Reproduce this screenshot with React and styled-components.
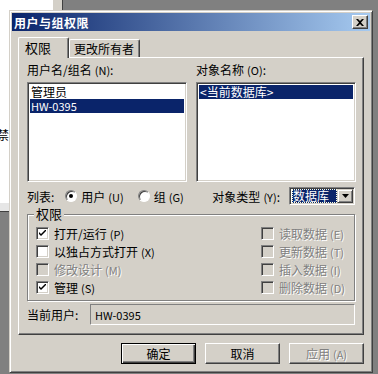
import React from 'react';
import styled, { createGlobalStyle } from 'styled-components';

const face = '#D4D0C8';
const font = '"Noto Sans CJK SC", "Liberation Sans", sans-serif';

const GlobalStyle = createGlobalStyle`
  html, body { margin: 0; padding: 0; }
  body {
    width: 378px;
    height: 374px;
    overflow: hidden;
    background: #808080;
    font-family: ${font};
    font-size: 12px;
    color: #000;
  }
`;

// desktop behind the dialog

const Desktop = styled.div`
  position: relative;
  width: 378px;
  height: 374px;
  overflow: hidden;
`;

const BackWindow = styled.div`
  position: absolute;
  left: 0;
  top: 0;
  width: 53px;
  height: 203px;
  background: #fff;
  border-bottom: 8px solid #e6e6e6;
`;

const BackEdge = styled.div`
  position: absolute;
  left: 0;
  top: 211px;
  width: 53px;
  height: 1px;
  background: #404040;
`;

const BackBar = styled.div`
  position: absolute;
  left: 53px;
  top: 0;
  width: 9px;
  height: 12px;
  background: ${face};
  border-right: 1px solid #404040;
`;

const BackText = styled.span`
  position: absolute;
  left: -3px;
  top: 128px;
  font-size: 12px;
  line-height: 14px;
`;

// dialog frame

const Dialog = styled.div`
  position: absolute;
  left: 9px;
  top: 10px;
  width: 364px;
  height: 363px;
  box-sizing: border-box;
  background: ${face};
  border: 1px solid;
  border-color: ${face} #404040 #404040 ${face};
  box-shadow: inset 1px 1px #fff, inset -1px -1px #808080;
  padding: 2px;
  display: flex;
  flex-direction: column;
`;

const TitleBar = styled.div`
  height: 18px;
  display: flex;
  align-items: center;
  justify-content: space-between;
  padding: 0 2px;
  background: linear-gradient(to right, #0a246a, #a6caf0);
`;

const Title = styled.span`
  color: #fff;
  font-weight: bold;
  font-size: 12px;
  letter-spacing: 0.5px;
`;

const CloseButton = styled.div`
  width: 16px;
  height: 14px;
  box-sizing: border-box;
  background: ${face};
  border: 1px solid;
  border-color: #fff #404040 #404040 #fff;
  box-shadow: inset -1px -1px #808080;
  display: flex;
  align-items: center;
  justify-content: center;
`;

const Body = styled.div`
  padding: 6px 6px 0 6px;
  display: flex;
  flex-direction: column;
`;

// tabs

const TabStrip = styled.div`
  display: flex;
  align-items: flex-end;
  height: 20px;
`;

const Tab = styled.div`
  position: relative;
  z-index: ${p => (p.active ? 2 : 1)};
  box-sizing: border-box;
  height: ${p => (p.active ? '21px' : '18px')};
  margin-bottom: ${p => (p.active ? '-1px' : '0')};
  padding: ${p => (p.active ? '3px 6px 0 6px' : '2px 4px 0 4px')};
  width: ${p => p.width}px;
  background: ${face};
  border-top: 1px solid #fff;
  border-left: 1px solid #fff;
  border-right: 1px solid #404040;
  border-radius: 2px 2px 0 0;
  box-shadow: inset -1px 0 #808080;
  font-size: ${p => (p.active ? '13px' : '12px')};
  line-height: 14px;
`;

const Panel = styled.div`
  box-sizing: border-box;
  height: 278px;
  border: 1px solid;
  border-color: #fff #404040 #404040 #fff;
  box-shadow: inset -1px -1px #808080;
  padding: 5px 7px 0 8px;
  display: flex;
  flex-direction: column;
`;

const Columns = styled.div`
  display: grid;
  grid-template-columns: 160px 160px;
  column-gap: 9px;
`;

const Label = styled.div`
  line-height: 14px;
  margin-bottom: 5px;
  white-space: nowrap;
`;

const ListBox = styled.div`
  box-sizing: border-box;
  height: 100px;
  background: #fff;
  border: 1px solid;
  border-color: #808080 #fff #fff #808080;
  box-shadow: inset 1px 1px #404040, inset -1px -1px ${face};
  padding: 2px;
`;

const ListItem = styled.div`
  height: 14px;
  line-height: 14px;
  padding-left: 1px;
  white-space: nowrap;
  background: ${p => (p.selected ? '#0a246a' : 'transparent')};
  color: ${p => (p.selected ? '#fff' : '#000')};
  font-size: ${p => (p.latin ? '11px' : '12px')};
`;

const OptionRow = styled.div`
  display: flex;
  align-items: center;
  height: 18px;
  margin-top: 5px;
  white-space: nowrap;
`;

const RowLabel = styled.span`
  margin-right: 11px;
`;

const RadioLabel = styled.span`
  display: flex;
  align-items: center;
  gap: 4px;
  margin-right: ${p => p.gap}px;
`;

const Radio = styled.span`
  width: 12px;
  height: 12px;
  box-sizing: border-box;
  border-radius: 50%;
  background: #fff;
  border: 1px solid;
  border-color: #808080 #fff #fff #808080;
  box-shadow: inset 1px 1px #404040;
  display: flex;
  align-items: center;
  justify-content: center;
  &::after {
    content: '';
    width: 4px;
    height: 4px;
    border-radius: 50%;
    background: ${p => (p.checked ? '#000' : 'transparent')};
  }
`;

const TypeLabel = styled.span`
  margin-left: auto;
  margin-right: 9px;
`;

const Select = styled.div`
  box-sizing: border-box;
  width: 66px;
  height: 18px;
  background: #fff;
  border: 1px solid;
  border-color: #808080 #fff #fff #808080;
  box-shadow: inset 1px 1px #404040, inset -1px -1px ${face};
  padding: 1px 1px 1px 2px;
  display: flex;
  margin-right: 1px;
`;

const SelectValue = styled.span`
  flex: 1;
  background: #0a246a;
  color: #fff;
  line-height: 14px;
  font-size: 12px;
  outline: 1px dotted #ffd;
  outline-offset: -1px;
  padding-left: 1px;
  white-space: nowrap;
`;

const SelectButton = styled.span`
  width: 16px;
  box-sizing: border-box;
  background: ${face};
  border: 1px solid;
  border-color: ${face} #404040 #404040 ${face};
  box-shadow: inset 1px 1px #fff, inset -1px -1px #808080;
  display: flex;
  align-items: center;
  justify-content: center;
`;

const Group = styled.div`
  position: relative;
  margin-top: 9px;
  margin-right: 1px;
  height: 87px;
  box-sizing: border-box;
  border: 1px solid #808080;
  box-shadow: inset 1px 1px #fff, 1px 1px #fff;
  padding: 9px 8px 0 8px;
  display: grid;
  grid-template-columns: 225px 1fr;
  grid-auto-rows: 18px;
`;

const Legend = styled.span`
  position: absolute;
  top: -8px;
  left: 6px;
  padding: 0 2px;
  background: ${face};
  line-height: 14px;
  font-size: 13px;
`;

const CheckRow = styled.div`
  display: flex;
  align-items: center;
  gap: 5px;
  white-space: nowrap;
  color: ${p => (p.disabled ? '#808080' : '#000')};
  text-shadow: ${p => (p.disabled ? '1px 1px #fff' : 'none')};
`;

const Box = styled.span`
  width: 13px;
  height: 13px;
  flex: none;
  box-sizing: border-box;
  background: ${p => (p.disabled ? face : '#fff')};
  border: 1px solid;
  border-color: #808080 #fff #fff #808080;
  box-shadow: inset 1px 1px #404040, inset -1px -1px ${face};
  display: flex;
  align-items: center;
  justify-content: center;
`;

const Key = styled.span`
  font-size: 11px;
  margin-left: 3px;
`;

const UserRow = styled.div`
  display: flex;
  align-items: center;
  margin-top: 3px;
  margin-right: 1px;
`;

const UserLabel = styled.span`
  width: 63px;
  white-space: nowrap;
`;

const UserField = styled.div`
  flex: 1;
  height: 21px;
  box-sizing: border-box;
  border: 1px solid;
  border-color: #808080 #fff #fff #808080;
  display: flex;
  align-items: center;
  padding-left: 4px;
  font-size: 11px;
`;

const ButtonRow = styled.div`
  display: flex;
  justify-content: flex-end;
  gap: 9px;
  margin-top: 8px;
`;

const Button = styled.div`
  width: 75px;
  height: 21px;
  box-sizing: border-box;
  background: ${face};
  border: 1px solid;
  border-color: ${p => (p.primary ? '#000' : `#fff #404040 #404040 #fff`)};
  box-shadow: ${p =>
    p.primary
      ? 'inset 1px 1px #fff, inset -1px -1px #404040, inset -2px -2px #808080'
      : 'inset -1px -1px #808080'};
  display: flex;
  align-items: center;
  justify-content: center;
  color: ${p => (p.disabled ? '#808080' : '#000')};
  text-shadow: ${p => (p.disabled ? '1px 1px #fff' : 'none')};
`;

const Check = () => (
  <svg width="7" height="7" viewBox="0 0 7 7">
    <path d="M0 2 L0 4 L2 6 L7 1 L7 -1 L2 4 Z" fill="#000" />
  </svg>
);

const leftPerms = [
  { text: '打开/运行', key: '(P)', checked: true },
  { text: '以独占方式打开', key: '(X)' },
  { text: '修改设计', key: '(M)', disabled: true },
  { text: '管理', key: '(S)', checked: true },
];

const rightPerms = [
  { text: '读取数据', key: '(E)' },
  { text: '更新数据', key: '(T)' },
  { text: '插入数据', key: '(I)' },
  { text: '删除数据', key: '(D)' },
];

const Perm = ({ item, disabled }) => (
  <CheckRow disabled={disabled}>
    <Box disabled={disabled}>{item.checked && <Check />}</Box>
    <span>
      {item.text}
      <Key>{item.key}</Key>
    </span>
  </CheckRow>
);

export default function App() {
  const rows = [];
  leftPerms.forEach((item, i) => {
    rows.push(<Perm key={'l' + i} item={item} disabled={item.disabled} />);
    rows.push(<Perm key={'r' + i} item={rightPerms[i]} disabled />);
  });

  return (
    <Desktop>
      <GlobalStyle />
      <BackWindow />
      <BackEdge />
      <BackBar />
      <BackText>禁:</BackText>
      <Dialog>
        <TitleBar>
          <Title>用户与组权限</Title>
          <CloseButton>
            <svg width="8" height="7" viewBox="0 0 8 7">
              <path d="M0 0h2l2 2 2-2h2L5 3.5 8 7H6L4 5 2 7H0l3-3.5z" fill="#000" />
            </svg>
          </CloseButton>
        </TitleBar>
        <Body>
          <TabStrip>
            <Tab active width={51}>权限</Tab>
            <Tab width={71}>更改所有者</Tab>
          </TabStrip>
          <Panel>
            <Columns>
              <div>
                <Label>用户名/组名<Key>(N)</Key>:</Label>
                <ListBox>
                  <ListItem>管理员</ListItem>
                  <ListItem selected latin>HW-0395</ListItem>
                </ListBox>
              </div>
              <div>
                <Label>对象名称<Key>(O)</Key>:</Label>
                <ListBox>
                  <ListItem selected>&lt;当前数据库&gt;</ListItem>
                </ListBox>
              </div>
            </Columns>
            <OptionRow>
              <RowLabel>列表:</RowLabel>
              <RadioLabel gap={14}>
                <Radio checked />
                <span>用户<Key>(U)</Key></span>
              </RadioLabel>
              <RadioLabel gap={0}>
                <Radio />
                <span>组<Key>(G)</Key></span>
              </RadioLabel>
              <TypeLabel>对象类型<Key>(Y)</Key>:</TypeLabel>
              <Select>
                <SelectValue>数据库</SelectValue>
                <SelectButton>
                  <svg width="7" height="4" viewBox="0 0 7 4">
                    <path d="M0 0h7L3.5 4z" fill="#000" />
                  </svg>
                </SelectButton>
              </Select>
            </OptionRow>
            <Group>
              <Legend>权限</Legend>
              {rows}
            </Group>
            <UserRow>
              <UserLabel>当前用户:</UserLabel>
              <UserField>HW-0395</UserField>
            </UserRow>
          </Panel>
          <ButtonRow>
            <Button primary>确定</Button>
            <Button>取消</Button>
            <Button disabled>应用<Key>(A)</Key></Button>
          </ButtonRow>
        </Body>
      </Dialog>
    </Desktop>
  );
}
